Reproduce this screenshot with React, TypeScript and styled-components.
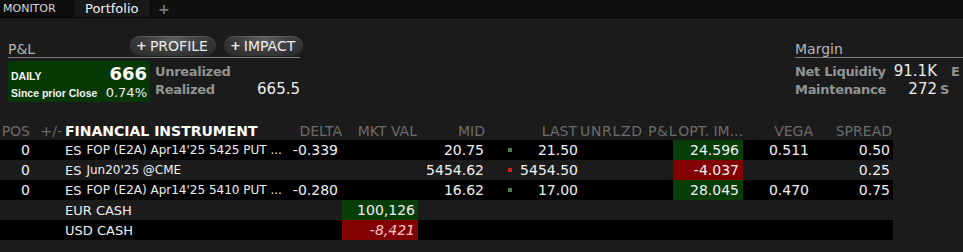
import React from 'react'
import styled, { createGlobalStyle, css } from 'styled-components'

const GlobalStyle = createGlobalStyle`
  html, body {
    margin: 0;
    padding: 0;
    background: #1b1b1b;
    overflow: hidden;
  }
  body {
    font-family: "DejaVu Sans", Verdana, sans-serif;
    color: #eeeeee;
  }
`

const Page = styled.div`
  width: 963px;
  height: 252px;
  overflow: hidden;
  background: #1b1b1b;
`

const TabBar = styled.div`
  display: flex;
  align-items: stretch;
  height: 17px;
  background: #101010;
  border-bottom: 1px solid #050505;
`

const Tab = styled.div<{ $active?: boolean }>`
  display: flex;
  align-items: center;
  box-sizing: border-box;
  ${(p) =>
    p.$active
      ? css`
          width: 78px;
          padding-left: 11px;
          font-size: 13px;
          color: #f2f2f2;
          background: #181818;
          border-left: 1px solid #050505;
          border-right: 1px solid #050505;
        `
      : css`
          width: 73px;
          padding-left: 3px;
          font-size: 11px;
          color: #d8d8d8;
          background: #0d0d0d;
        `}
`

const AddTab = styled.div`
  display: flex;
  align-items: center;
  padding-left: 7px;
  font-size: 14px;
  font-weight: bold;
  color: #7a7a7a;
`

const Summary = styled.div`
  display: flex;
  align-items: flex-start;
  padding: 18px 0 0 8px;
  height: 86px;
`

const PnlPanel = styled.div`
  width: 292px;
  flex-shrink: 0;
`

const PanelHead = styled.div`
  display: flex;
  align-items: center;
  height: 21px;
  border-bottom: 1px solid #7c7c7c;
`

const PanelTitle = styled.div`
  flex-shrink: 0;
  font-size: 14px;
  color: #b4b4b4;
  padding-top: 5px;
  width: 122px;
`

const PillButton = styled.div`
  flex-shrink: 0;
  display: inline-flex;
  align-items: center;
  height: 20px;
  margin-top: -2px;
  padding: 0 8px 0 6px;
  margin-right: 8px;
  border-radius: 10px 11px 11px 10px / 10px 10px 10px 10px;
  background: radial-gradient(ellipse at 50% 20%, #5e5e5e 0%, #3e3e3e 45%, #262626 100%);
  box-shadow: inset 0 1px 0 rgba(255, 255, 255, 0.15), 0 0 0 1px #1e1e1e;
  font-size: 14px;
  color: #ececec;
  span {
    font-weight: bold;
    margin-right: 3px;
    font-size: 13px;
  }
`

const PnlBody = styled.div`
  display: flex;
  margin-top: 3px;
`

const DailyBox = styled.div`
  width: 142px;
  height: 41px;
  background: #063806;
  box-sizing: border-box;
  padding: 3px 3px 2px 3px;
  display: flex;
  flex-direction: column;
  justify-content: space-between;
`

const BoxRow = styled.div`
  display: flex;
  align-items: baseline;
  justify-content: space-between;
`

const SmallLabel = styled.span`
  font-family: "Liberation Sans", Arial, sans-serif;
  font-size: 10.5px;
  font-weight: bold;
  color: #f4f4f4;
`

const BigNumber = styled.span`
  font-size: 18px;
  font-weight: bold;
  color: #ffffff;
  line-height: 20px;
`

const Percent = styled.span`
  font-size: 13px;
  color: #f0f0f0;
`

const StatGrid = styled.div<{ $cols: string; $indent?: number }>`
  display: grid;
  grid-template-columns: ${(p) => p.$cols};
  grid-auto-rows: 18px;
  align-items: center;
  padding: 1px 0 0 ${(p) => p.$indent ?? 0}px;
`

const StatLabel = styled.div<{ $gap?: number }>`
  font-size: 13px;
  letter-spacing: -0.3px;
  font-weight: bold;
  color: #929292;
  white-space: nowrap;
  padding-left: ${(p) => p.$gap ?? 0}px;
`

const StatValue = styled.div`
  font-size: 15px;
  color: #ececec;
  text-align: right;
  white-space: nowrap;
`

const MarginPanel = styled.div`
  margin-left: 495px;
  width: 260px;
  flex-shrink: 0;
`

const Table = styled.div`
  width: 893px;
`

const COLS = '35px 29px 221px 57px 76px 68px 26px 68px 93px 70px 72px 78px'

const HeadRow = styled.div`
  display: grid;
  grid-template-columns: ${COLS};
  height: 18px;
  align-items: center;
`

const Row = styled.div<{ $dark?: boolean }>`
  display: grid;
  grid-template-columns: ${COLS};
  height: 20px;
  align-items: stretch;
  background: ${(p) => (p.$dark ? '#000000' : 'transparent')};
`

const Head = styled.div<{ $left?: boolean; $pad?: number; $wide?: boolean }>`
  font-size: 14px;
  color: #6c6c6c;
  white-space: nowrap;
  text-align: ${(p) => (p.$left ? 'left' : 'right')};
  padding: 0 ${(p) => (p.$left ? 0 : p.$pad ?? 2)}px 0 ${(p) => (p.$left ? 1 : 0)}px;
  letter-spacing: ${(p) => (p.$wide ? '0.7px' : 'normal')};
`

const Instrument = styled(Head)`
  font-size: 14px;
  font-weight: bold;
  color: #ffffff;
`

const Cell = styled.div<{ $tone?: 'up' | 'down'; $pad?: number; $left?: boolean; $italic?: boolean }>`
  display: flex;
  align-items: center;
  justify-content: ${(p) => (p.$left ? 'flex-start' : 'flex-end')};
  padding: 0 ${(p) => p.$pad ?? 3}px 0 ${(p) => (p.$left ? 1 : 0)}px;
  font-size: 14px;
  color: ${(p) => (p.$italic ? '#ffc6c6' : '#f0f0f0')};
  font-style: ${(p) => (p.$italic ? 'italic' : 'normal')};
  white-space: nowrap;
  overflow: hidden;
  background: ${(p) => (p.$tone === 'up' ? '#073d07' : p.$tone === 'down' ? '#820101' : 'transparent')};
`

const Sym = styled.span`
  font-size: 13px;
  margin-right: 5px;
`

const Detail = styled.span`
  font-size: 12px;
`

const Tick = styled.i<{ $down?: boolean }>`
  display: block;
  width: 4px;
  height: 4px;
  background: ${(p) => (p.$down ? '#d42020' : '#4f7f4f')};
`

type Pos = {
  pos: string
  sym: string
  detail: string
  delta: string
  mid: string
  down?: boolean
  last: string
  imp: string
  impDown?: boolean
  vega: string
  spread: string
}

const positions: Pos[] = [
  { pos: '0', sym: 'ES', detail: "FOP (E2A) Apr14'25 5425 PUT ...", delta: '-0.339', mid: '20.75', last: '21.50', imp: '24.596', vega: '0.511', spread: '0.50' },
  { pos: '0', sym: 'ES', detail: "Jun20'25 @CME", delta: '', mid: '5454.62', down: true, last: '5454.50', imp: '-4.037', impDown: true, vega: '', spread: '0.25' },
  { pos: '0', sym: 'ES', detail: "FOP (E2A) Apr14'25 5410 PUT ...", delta: '-0.280', mid: '16.62', last: '17.00', imp: '28.045', vega: '0.470', spread: '0.75' },
]

const Blank = () => <Cell />

export default function App() {
  return (
    <Page>
      <GlobalStyle />
      <TabBar>
        <Tab>MONITOR</Tab>
        <Tab $active>Portfolio</Tab>
        <AddTab>+</AddTab>
      </TabBar>

      <Summary>
        <PnlPanel>
          <PanelHead>
            <PanelTitle>P&amp;L</PanelTitle>
            <PillButton>
              <span>+</span>PROFILE
            </PillButton>
            <PillButton>
              <span>+</span>IMPACT
            </PillButton>
          </PanelHead>
          <PnlBody>
            <DailyBox>
              <BoxRow>
                <SmallLabel>DAILY</SmallLabel>
                <BigNumber>666</BigNumber>
              </BoxRow>
              <BoxRow>
                <SmallLabel>Since prior Close</SmallLabel>
                <Percent>0.74%</Percent>
              </BoxRow>
            </DailyBox>
            <StatGrid $cols="100px 45px" $indent={5}>
              <StatLabel>Unrealized</StatLabel>
              <StatValue />
              <StatLabel>Realized</StatLabel>
              <StatValue>665.5</StatValue>
            </StatGrid>
          </PnlBody>
        </PnlPanel>

        <MarginPanel>
          <PanelHead>
            <PanelTitle>Margin</PanelTitle>
          </PanelHead>
          <PnlBody>
            <StatGrid $cols="95px 47px 20px">
              <StatLabel>Net Liquidity</StatLabel>
              <StatValue>91.1K</StatValue>
              <StatLabel $gap={14}>E</StatLabel>
              <StatLabel>Maintenance</StatLabel>
              <StatValue>272</StatValue>
              <StatLabel $gap={3}>S</StatLabel>
            </StatGrid>
          </PnlBody>
        </MarginPanel>
      </Summary>

      <Table>
        <HeadRow>
          <Head $pad={5}>POS</Head>
          <Head>+/-</Head>
          <Instrument $left>FINANCIAL INSTRUMENT</Instrument>
          <Head $pad={0}>DELTA</Head>
          <Head $pad={1}>MKT VAL</Head>
          <Head $pad={1}>MID</Head>
          <Head />
          <Head $pad={3}>LAST</Head>
          <Head $pad={0} $wide>
            UNRLZD P&amp;L
          </Head>
          <Head $pad={0}>OPT. IM...</Head>
          <Head>VEGA</Head>
          <Head $pad={1}>SPREAD</Head>
        </HeadRow>

        {positions.map((p, i) => (
          <Row key={i} $dark={i % 2 === 0}>
            <Cell $pad={5}>{p.pos}</Cell>
            <Blank />
            <Cell $left>
              <Sym>{p.sym}</Sym>
              <Detail>{p.detail}</Detail>
            </Cell>
            <Cell $pad={4}>{p.delta}</Cell>
            <Blank />
            <Cell $pad={2}>{p.mid}</Cell>
            <Cell $pad={0}>
              <Tick $down={p.down} />
            </Cell>
            <Cell $pad={2}>{p.last}</Cell>
            <Blank />
            <Cell $tone={p.impDown ? 'down' : 'up'} $pad={4}>
              {p.imp}
            </Cell>
            <Cell $pad={6}>{p.vega}</Cell>
            <Cell $pad={3}>{p.spread}</Cell>
          </Row>
        ))}

        <Row>
          <Blank />
          <Blank />
          <Cell $left>
            <Sym>EUR CASH</Sym>
          </Cell>
          <Blank />
          <Cell $tone="up" $pad={3}>
            100,126
          </Cell>
        </Row>
        <Row $dark>
          <Blank />
          <Blank />
          <Cell $left>
            <Sym>USD CASH</Sym>
          </Cell>
          <Blank />
          <Cell $tone="down" $pad={3} $italic>
            -8,421
          </Cell>
        </Row>
      </Table>
    </Page>
  )
}
